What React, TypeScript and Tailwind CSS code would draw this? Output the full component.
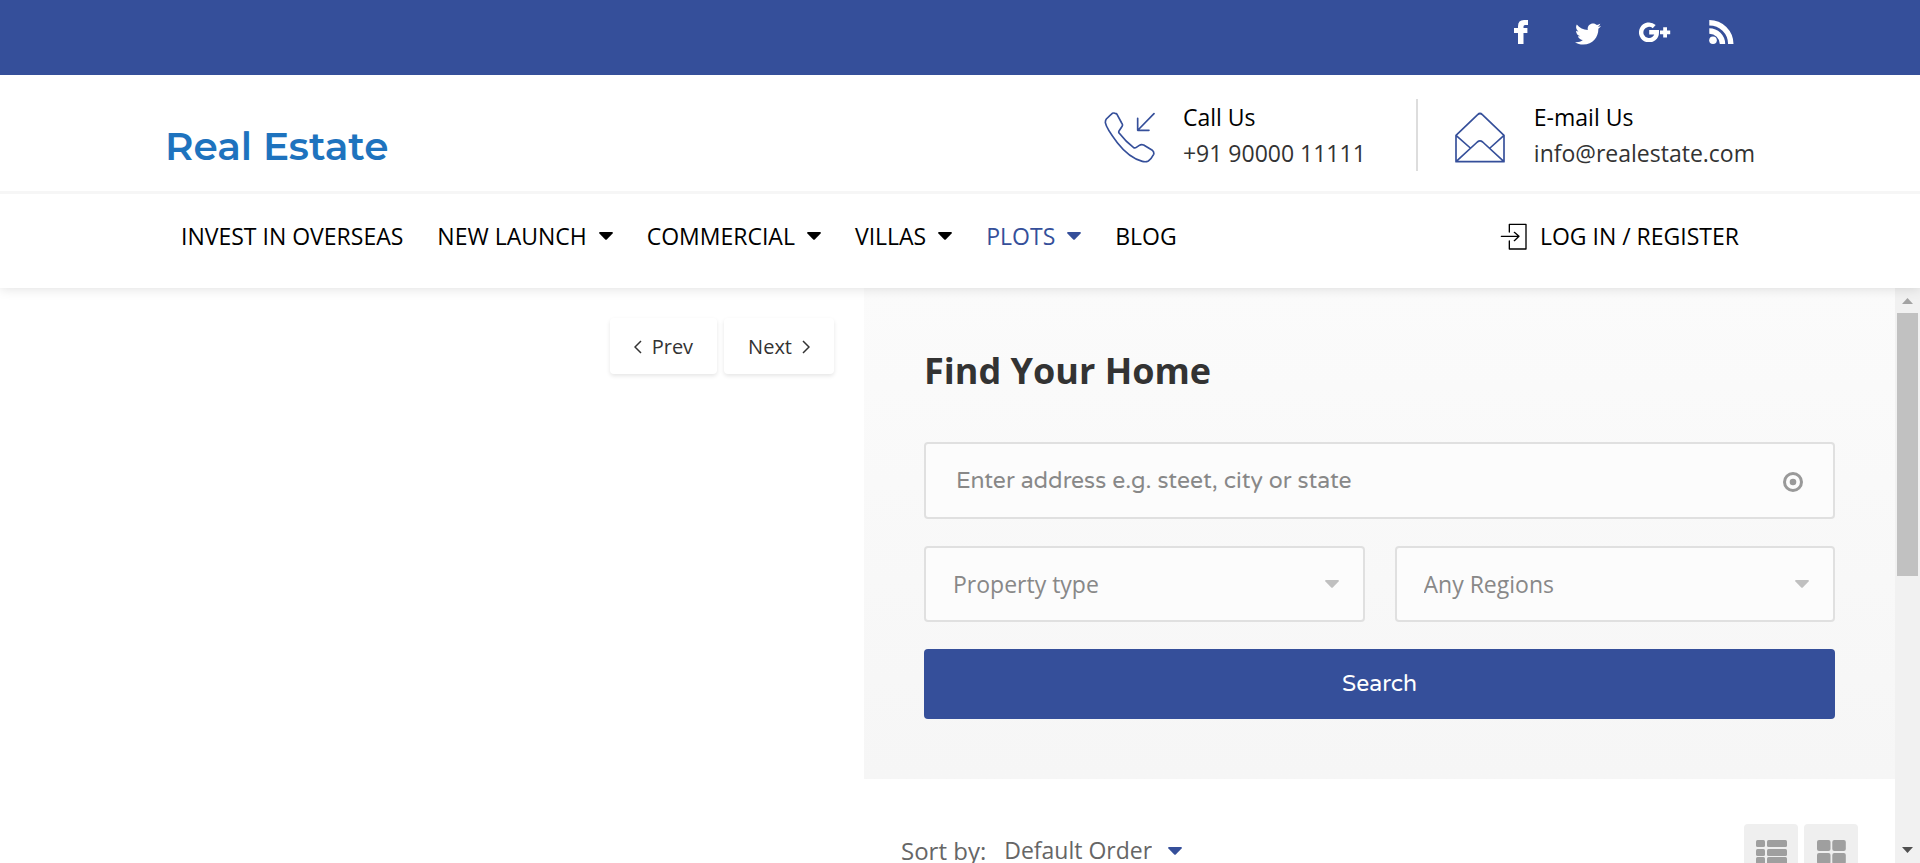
import type { ReactNode } from "react";
import { FaTwitter } from "react-icons/fa";

const navItems = [
  { label: "INVEST IN OVERSEAS", menu: false, active: false },
  { label: "NEW LAUNCH", menu: true, active: false },
  { label: "COMMERCIAL", menu: true, active: false },
  { label: "VILLAS", menu: true, active: false },
  { label: "PLOTS", menu: true, active: true },
  { label: "BLOG", menu: false, active: false },
];

function Caret({ className }: { className: string }) {
  return (
    <svg viewBox="0 0 14 8" className={className} fill="currentColor" aria-hidden="true">
      <path d="M1 0h12q1.400 .3 .6 1.400L8 7.300q-1 1-2 0L.4 1.400Q-.4.3 1 0z" />
    </svg>
  );
}

function SocialLink({ label, children }: { label: string; children: ReactNode }) {
  return (
    <a href="#" aria-label={label} className="flex h-16 w-[67px] items-center justify-center text-white">
      {children}
    </a>
  );
}

function TopBar() {
  return (
    <div className="h-[75px] shrink-0 bg-[#354f9a]">
      <div className="mx-auto flex w-full max-w-[1590px] justify-end">
        <SocialLink label="Facebook">
          <svg viewBox="0 0 14 24" className="h-6 w-3.5" fill="currentColor" aria-hidden="true">
            <path d="M9.500 24V13H13.400V8H9.500V6.600Q9.500 5 11 5H14V0H10Q4 0 4 6.200V8H0v5h4v11z" />
          </svg>
        </SocialLink>
        <SocialLink label="Twitter">
          <FaTwitter className="mt-1 h-[26px] w-[26px]" />
        </SocialLink>
        <SocialLink label="Google Plus">
          <svg viewBox="0 0 32 20" className="h-5 w-8" aria-hidden="true">
            <path d="M15.200 4.600A7.800 7.800 0 1 0 17.800 10.300H10.200" fill="none" stroke="currentColor" strokeWidth="4.400" />
            <path d="M24.200 5.300h3.800v3.200h3.200v3.800h-3.200v3.200h-3.800v-3.200H21V8.500h3.200z" fill="currentColor" />
          </svg>
        </SocialLink>
        <SocialLink label="RSS">
          <svg viewBox="0 0 25 24" className="h-6 w-[25px]" aria-hidden="true">
            <circle cx="4" cy="20.200" r="3.800" fill="currentColor" />
            <path d="M.3 11A13.200 13.200 0 0 1 13.500 24M.3 2.700A21.500 21.500 0 0 1 21.800 24" fill="none" stroke="currentColor" strokeWidth="5.400" />
          </svg>
        </SocialLink>
      </div>
    </div>
  );
}

function Contact({ icon, title, href, value }: { icon: ReactNode; title: string; href: string; value: string }) {
  return (
    <div className="flex items-center gap-7">
      {icon}
      <div className="pb-1 text-[23px] leading-9">
        <p className="font-medium text-black">{title}</p>
        <a href={href} className="block text-[#333]">{value}</a>
      </div>
    </div>
  );
}

function Header() {
  return (
    <header className="relative z-10 shrink-0 bg-white shadow-[0_0_12px_rgba(0,0,0,0.14)]">
      <TopBar />
      <div className="border-b-[3px] border-[#f6f6f6]">
        <div className="mx-auto flex h-[116px] w-full max-w-[1590px] justify-between">
          <a href="#" className="pt-[47px] font-['Montserrat','Inter',sans-serif] text-[39px] leading-12 font-semibold text-[#1e73be]">
            Real Estate
          </a>
          <div className="flex items-start pt-6">
            <Contact
              title="Call Us"
              href="tel:+919000011111"
              value="+91 90000 11111"
              icon={
                <svg viewBox="72 60 156 156" className="h-[52px] w-[52px]" fill="none" stroke="#354f9a" strokeWidth="5" strokeLinecap="round" strokeLinejoin="round" aria-hidden="true">
                  <path d="M108 67Q112 67 114 70L128 96Q133 102 128 108L120 120Q118 124 121 127Q140 152 164 170Q168 172 172 169L181 163Q187 159 194 162L220 178Q226 183 224 190Q216 205 208 210Q200 214 190 211Q150 200 115 155Q82 112 79 95Q79 88 82 84Q94 72 100 67Q104 65 108 67Z" />
                  <path d="M225 68L177 117M176 82V118H210" />
                </svg>
              }
            />
            <div className="mr-9 ml-[50px] h-[72px] w-0.5 bg-[#ddd]" />
            <Contact
              title="E-mail Us"
              href="mailto:info@realestate.com"
              value="info@realestate.com"
              icon={
                <svg viewBox="153 60 156 156" className="h-[52px] w-[52px]" fill="none" stroke="#354f9a" strokeWidth="5" strokeLinejoin="round" aria-hidden="true">
                  <path d="M159 133L224 71Q231 64 238 71L303 133V212H159ZM159 133L202 171M303 133L261 171M159 212L223 153Q231 146 239 153L303 212" />
                </svg>
              }
            />
          </div>
        </div>
      </div>
      <div className="mx-auto flex w-full max-w-[1590px] justify-between px-4 pt-[25px] pb-[35px] text-[23px] leading-[34px] font-medium">
        <nav className="flex gap-[34px]">
          {navItems.map((item) => (
            <a key={item.label} href="#" className={item.active ? "flex items-center gap-3 text-[#354f9a]" : "flex items-center gap-3 text-black"}>
              {item.label}
              {item.menu && <Caret className="h-2 w-3.5" />}
            </a>
          ))}
        </nav>
        <a href="#" className="flex items-center gap-3 text-black">
          <svg viewBox="300 396 84 84" className="h-7 w-7" fill="none" stroke="currentColor" strokeWidth="4" strokeLinecap="round" strokeLinejoin="round" aria-hidden="true">
            <path d="M328 426V403H378V477H328V453M304 439H357M343 427L357 439L343 452" />
          </svg>
          LOG IN / REGISTER
        </a>
      </div>
    </header>
  );
}

function Select({ label }: { label: string }) {
  return (
    <div className="relative flex-1">
      <select aria-label={label} className="h-[76px] w-full appearance-none rounded border-2 border-[#e0e0e0] bg-[#fcfcfc] px-[27px] text-[23px] text-[#888]">
        <option>{label}</option>
      </select>
      <Caret className="pointer-events-none absolute top-[34px] right-[26px] h-2 w-3.5 text-[#c0c0c0]" />
    </div>
  );
}

function SearchPanel() {
  return (
    <form className="bg-linear-to-b from-[#fbfbfb] to-[#f6f6f6] px-[60px] pt-[59px] pb-[60px]">
      <h1 className="mb-[47px] text-4xl leading-12 font-bold text-[#333]">Find Your Home</h1>
      <div className="relative">
        <input
          type="text"
          aria-label="Address"
          placeholder="Enter address e.g. steet, city or state"
          className="block h-[77px] w-full rounded border-2 border-[#e0e0e0] bg-[#fcfcfc] pr-20 pl-[30px] font-['Varela_Round','Lato',sans-serif] text-[23px] placeholder:text-[#888]"
        />
        <svg viewBox="0 0 20 20" className="absolute top-[30px] right-8 h-5 w-5" aria-hidden="true">
          <circle cx="10" cy="10" r="8.500" fill="none" stroke="#999" strokeWidth="3" />
          <circle cx="10" cy="10" r="3.300" fill="#999" />
        </svg>
      </div>
      <div className="my-[27px] flex gap-[30px]">
        <Select label="Property type" />
        <Select label="Any Regions" />
      </div>
      <button type="button" className="block h-[70px] w-full rounded bg-[#354f9a] font-['Varela_Round','Lato',sans-serif] text-[23px] font-medium text-white">
        Search
      </button>
    </form>
  );
}

function SortBar() {
  return (
    <div className="flex justify-between px-[37px] pt-[45px] text-[#666]">
      <div className="flex">
        <label htmlFor="sort" className="text-2xl leading-[54px]">Sort by:</label>
        <div className="relative ml-[14px]">
          <select id="sort" className="h-[52px] appearance-none bg-transparent pr-10 pl-1 text-[23px]">
            <option>Default Order</option>
          </select>
          <Caret className="pointer-events-none absolute top-[23px] right-2.5 h-2 w-3.5 text-[#354f9a]" />
        </div>
      </div>
      <div className="flex gap-1.5">
        <button type="button" aria-label="List view" className="flex h-[54px] w-[54px] justify-center rounded bg-[#efefef] pt-4">
          <svg viewBox="0 0 31 24" className="h-6 w-[31px]" fill="#9f9f9f" aria-hidden="true">
            {[0, 9, 17].map((y) => (
              <g key={y}>
                <rect x="0" y={y} width="9" height="7" rx="1.500" />
                <rect x="11" y={y} width="20" height="7" rx="1.500" />
              </g>
            ))}
          </svg>
        </button>
        <button type="button" aria-label="Grid view" className="flex h-[54px] w-[54px] justify-center rounded bg-[#efefef] pt-4">
          <svg viewBox="0 0 29 24" className="h-6 w-[29px]" fill="#9f9f9f" aria-hidden="true">
            <rect x="0" y="0" width="13.500" height="11" rx="2" />
            <rect x="15.300" y="0" width="13.500" height="11" rx="2" />
            <rect x="0" y="13" width="13.500" height="11" rx="2" />
            <rect x="15.300" y="13" width="13.500" height="11" rx="2" />
          </svg>
        </button>
      </div>
    </div>
  );
}

function ScrollTrack() {
  return (
    <div className="flex w-[25px] shrink-0 flex-col bg-[#f1f1f1]" aria-hidden="true">
      <svg viewBox="0 0 25 25" className="h-[25px] w-[25px] shrink-0">
        <path d="M7 16L12.500 10L18 16z" fill="#a3a3a3" />
      </svg>
      <div className="min-h-0 flex-1 px-0.5">
        <div className="h-1/2 bg-[#c1c1c1]" />
      </div>
      <svg viewBox="0 0 25 25" className="h-[25px] w-[25px] shrink-0">
        <path d="M7 9L12.500 15L18 9z" fill="#505050" />
      </svg>
    </div>
  );
}

function PagerButton({ children }: { children: ReactNode }) {
  return (
    <button type="button" className="flex h-14 items-center gap-2.5 rounded bg-white px-6 pt-0.5 text-xl font-medium text-[#333] shadow-[0_2px_4px_rgba(0,0,0,0.1)]">
      {children}
    </button>
  );
}

export default function App() {
  return (
    <div className="flex h-screen flex-col overflow-hidden bg-white font-['Open_Sans',sans-serif]">
      <Header />
      <main className="flex min-h-0 flex-1">
        <section className="flex w-[45%] items-start justify-end gap-[7px] pt-[30px] pr-[30px]">
          <PagerButton>
            <svg viewBox="0 0 8 14" className="h-3.5 w-2" fill="none" stroke="currentColor" strokeWidth="1.500" aria-hidden="true">
              <path d="M7 1L1 7L7 13" />
            </svg>
            Prev
          </PagerButton>
          <PagerButton>
            Next
            <svg viewBox="0 0 8 14" className="h-3.5 w-2" fill="none" stroke="currentColor" strokeWidth="1.500" aria-hidden="true">
              <path d="M1 1L7 7L1 13" />
            </svg>
          </PagerButton>
        </section>
        <section className="min-w-0 flex-1 overflow-hidden">
          <SearchPanel />
          <SortBar />
        </section>
        <ScrollTrack />
      </main>
    </div>
  );
}
